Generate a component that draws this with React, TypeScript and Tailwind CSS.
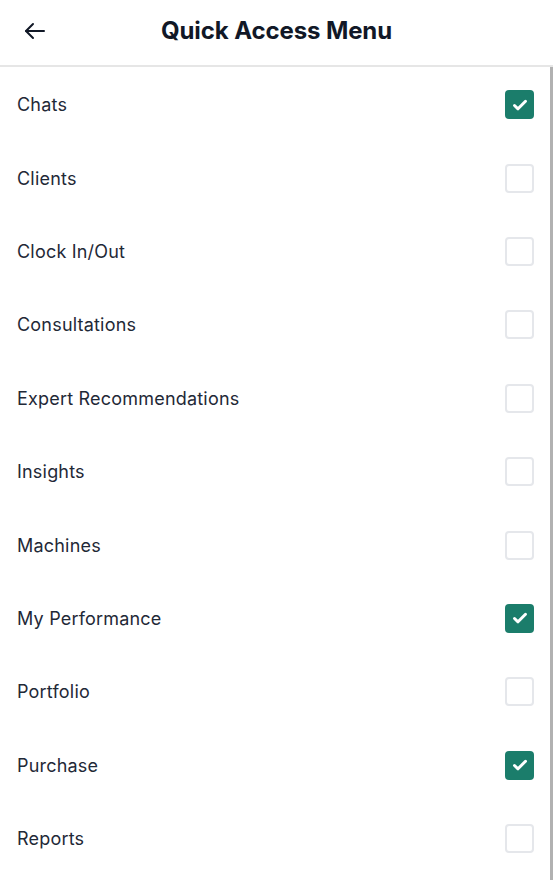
import React, { useState } from 'react';

const items = [
  { id: 'chats', label: 'Chats', on: true },
  { id: 'clients', label: 'Clients', on: false },
  { id: 'clock', label: 'Clock In/Out', on: false },
  { id: 'consult', label: 'Consultations', on: false },
  { id: 'expert', label: 'Expert Recommendations', on: false },
  { id: 'insights', label: 'Insights', on: false },
  { id: 'machines', label: 'Machines', on: false },
  { id: 'perf', label: 'My Performance', on: true },
  { id: 'portfolio', label: 'Portfolio', on: false },
  { id: 'purchase', label: 'Purchase', on: true },
  { id: 'reports', label: 'Reports', on: false },
];

export default function App() {
  const [checked, setChecked] = useState<Record<string, boolean>>(
    Object.fromEntries(items.map(i => [i.id, i.on]))
  );

  const toggle = (id: string) => setChecked(prev => ({ ...prev, [id]: !prev[id] }));

  return (
    <div className="h-[880px] w-[553px] bg-white flex flex-col overflow-hidden" style={{ fontFamily: 'Inter, "Noto Sans", sans-serif' }}>
      {/* Header */}
      <div className="h-[67px] shrink-0 relative flex items-center justify-center border-b-2 border-[#e6e6e6]">
        <button className="absolute left-[22px] top-[19px] text-[#111827]">
          <svg width="26" height="24" viewBox="0 0 26 24" fill="none" stroke="currentColor" strokeWidth="2" strokeLinecap="round" strokeLinejoin="round">
            <path d="M22 12H4" />
            <path d="M11 5l-7 7 7 7" />
          </svg>
        </button>
        <h1 className="text-[24px] font-bold text-[#111827] tracking-[-0.1px] -mt-[3px]">Quick Access Menu</h1>
      </div>

      {/* List */}
      <div className="flex-1 flex overflow-hidden">
        <div className="flex-1 overflow-hidden pt-[1px]">
          {items.map(item => (
            <div
              key={item.id}
              onClick={() => toggle(item.id)}
              className="h-[73.4px] flex items-center justify-between pl-[17px] pr-[16px] cursor-pointer"
            >
              <span className="text-[18px] tracking-[0.2px] text-[#1f2937]">{item.label}</span>
              {checked[item.id] ? (
                <span className="w-[29px] h-[29px] rounded-[4px] bg-[#1b7d6b] flex items-center justify-center">
                  <svg width="18" height="18" viewBox="0 0 18 18" fill="none" stroke="white" strokeWidth="3" strokeLinecap="round" strokeLinejoin="round">
                    <path d="M3.5 9.5l3.5 3.3L14.5 5.3" />
                  </svg>
                </span>
              ) : (
                <span className="w-[29px] h-[29px] rounded-[4px] border-2 border-[#e5e7eb] bg-white" />
              )}
            </div>
          ))}
        </div>
        <div className="w-[3px] shrink-0 bg-[#b1b1b1]" />
      </div>
    </div>
  );
}
